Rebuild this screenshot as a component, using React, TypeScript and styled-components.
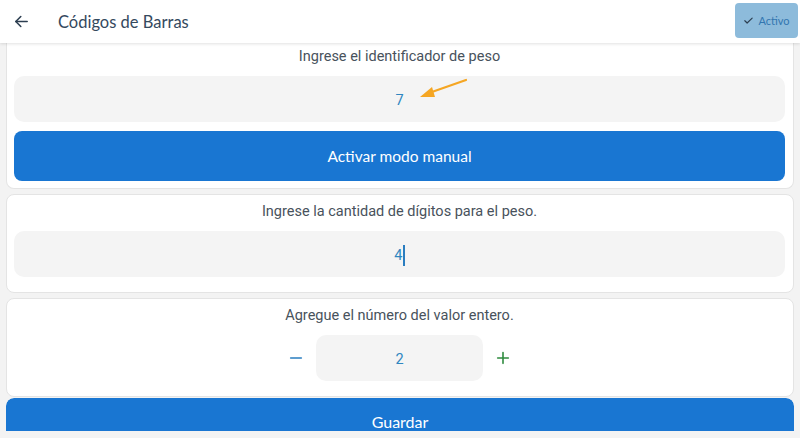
import * as React from 'react';
import styled, { createGlobalStyle } from 'styled-components';

const GlobalStyle = createGlobalStyle`
  html, body {
    margin: 0;
    padding: 0;
    background: #f3f3f3;
    font-family: Roboto, "Noto Sans", sans-serif;
  }
  * { box-sizing: border-box; }
`;

const Page = styled.div`
  width: 800px;
  height: 438px;
  overflow: hidden;
  background: #f3f3f3;
  display: flex;
  flex-direction: column;
  position: relative;
`;

const Header = styled.header`
  height: 43px;
  flex: none;
  background: #ffffff;
  display: flex;
  align-items: center;
  padding: 0 2px 0 12px;
  box-shadow: 0 1px 3px rgba(0, 0, 0, 0.12);
  position: relative;
  z-index: 2;
`;

const BackButton = styled.span`
  width: 18px;
  height: 18px;
  display: flex;
  align-items: center;
  justify-content: center;
  color: #2c3e50;
`;

const Title = styled.h1`
  margin: 0 0 0 28px;
  font-family: Lato, "Noto Sans", sans-serif;
  font-weight: 400;
  font-size: 16.5px;
  color: #34495e;
  flex: 1;
`;

const StatusButton = styled.span`
  width: 63px;
  height: 35px;
  margin-top: -2px;
  border-radius: 4px;
  background: #8dbbdb;
  color: #3276b0;
  font-family: Lato, "Noto Sans", sans-serif;
  font-size: 11px;
  display: flex;
  align-items: center;
  justify-content: center;
  gap: 4px;
`;

const Content = styled.main`
  display: flex;
  flex-direction: column;
  gap: 5px;
  padding: 0 6px;
`;

const Card = styled.section<{ $flushTop?: boolean; $bottom?: number }>`
  background: #ffffff;
  border: 1px solid #e4e4e4;
  border-top: ${(p) => (p.$flushTop ? 'none' : '1px solid #e4e4e4')};
  border-radius: ${(p) => (p.$flushTop ? '0 0 8px 8px' : '8px')};
  padding: ${(p) => (p.$flushTop ? '4px' : '7px')} 8px ${(p) => p.$bottom ?? 15}px 7px;
  display: flex;
  flex-direction: column;
  gap: 9px;
`;

const Label = styled.div`
  height: 20px;
  line-height: 20px;
  text-align: center;
  font-size: 14.5px;
  color: #48525c;
`;

const Field = styled.div<{ $width?: number }>`
  position: relative;
  height: 46px;
  width: ${(p) => (p.$width ? `${p.$width}px` : '100%')};
  border-radius: 10px;
  background: #f4f4f4;
  display: flex;
  align-items: center;
  justify-content: center;
  padding-top: 2px;
  font-size: 14.5px;
  color: #2f86c0;
`;

const Caret = styled.span`
  display: inline-block;
  width: 1.5px;
  height: 21px;
  margin-left: 1px;
  background: #2a7dc0;
`;

const Pointer = styled.svg`
  position: absolute;
  left: 379px;
  top: 2px;
`;

const PrimaryButton = styled.button`
  height: 50px;
  width: 100%;
  border: none;
  border-radius: 8px;
  background: #1976d2;
  color: #ffffff;
  font-family: Lato, "Noto Sans", sans-serif;
  font-size: 15.5px;
  cursor: pointer;
`;

const Stepper = styled.div`
  display: flex;
  align-items: center;
  justify-content: center;
  gap: 8px;
`;

const StepButton = styled.span<{ $color: string }>`
  width: 24px;
  height: 24px;
  display: flex;
  align-items: center;
  justify-content: center;
  color: ${(p) => p.$color};
`;

const Footer = styled.div`
  margin: 1px 6px 0;
  height: 33px;
  overflow: hidden;
  border-radius: 8px 8px 0 0;
`;

const SaveButton = styled(PrimaryButton)`
  height: 33px;
  padding-top: 15px;
  line-height: 18px;
  border-radius: 8px 8px 0 0;
  font-size: 16px;
`;

export default function App() {
  return (
    <Page>
      <GlobalStyle />
      <Header>
        <BackButton>
          <svg width="17" height="17" viewBox="0 0 24 24" fill="none" stroke="currentColor" strokeWidth="2.2" strokeLinecap="round" strokeLinejoin="round">
            <path d="M20 12H4" />
            <path d="M11 5l-7 7 7 7" />
          </svg>
        </BackButton>
        <Title>Códigos de Barras</Title>
        <StatusButton>
          <svg width="11" height="11" viewBox="0 0 24 24" fill="none" stroke="#2c3e50" strokeWidth="2.5" strokeLinecap="round" strokeLinejoin="round">
            <path d="M4 12.5l5 5L20 7" />
          </svg>
          Activo
        </StatusButton>
      </Header>
      <Content>
        <Card $flushTop $bottom={7}>
          <Label>Ingrese el identificador de peso</Label>
          <Field>
            7
            <Pointer width="80" height="26" viewBox="0 0 80 26">
              <path d="M73 2L36 15" stroke="#f5a623" strokeWidth="2.2" strokeLinecap="round" />
              <path d="M27 19L39 9L42 19Z" fill="#f5a623" />
            </Pointer>
          </Field>
          <PrimaryButton>Activar modo manual</PrimaryButton>
        </Card>
        <Card>
          <Label>Ingrese la cantidad de dígitos para el peso.</Label>
          <Field>
            4<Caret />
          </Field>
        </Card>
        <Card>
          <Label>Agregue el número del valor entero.</Label>
          <Stepper>
            <StepButton $color="#2a7dc0">
              <svg width="16" height="16" viewBox="0 0 24 24" fill="none" stroke="currentColor" strokeWidth="2.4" strokeLinecap="round">
                <path d="M4 12h16" />
              </svg>
            </StepButton>
            <Field $width={167}>2</Field>
            <StepButton $color="#2e8b3e">
              <svg width="16" height="16" viewBox="0 0 24 24" fill="none" stroke="currentColor" strokeWidth="2.4" strokeLinecap="round">
                <path d="M4 12h16" />
                <path d="M12 4v16" />
              </svg>
            </StepButton>
          </Stepper>
        </Card>
      </Content>
      <Footer>
        <SaveButton>Guardar</SaveButton>
      </Footer>
    </Page>
  );
}
